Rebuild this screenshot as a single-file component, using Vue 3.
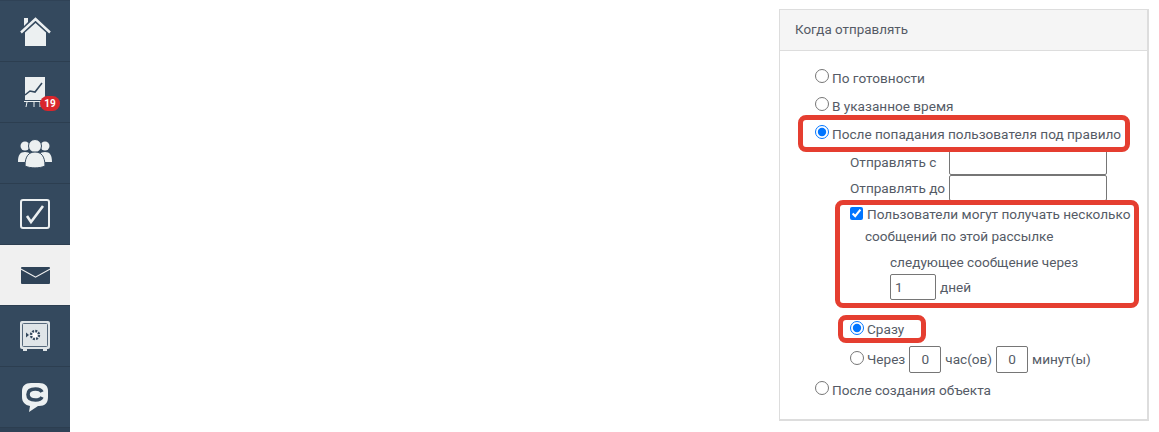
<template>
  <div class="page">
    <nav class="sidebar">
      <a v-for="item in items" :key="item.id" class="nav-item" :class="{ active: item.id === 'mail' }">
        <svg v-if="item.id === 'home'" width="31" height="29" viewBox="0 0 31 29">
          <path d="M4 1h4v4l-4 4z" fill="#ecf0f1" />
          <path d="M1 15.500 15.500 2 30 15.500" fill="none" stroke="#ecf0f1" stroke-width="2.4" />
          <path d="M5 15.500 15.500 6 26 15.500V29H5z" fill="#ecf0f1" />
        </svg>
        <svg v-else-if="item.id === 'chart'" width="22" height="30" viewBox="0 0 22 30">
          <path d="M1 0h20v23H1z" fill="#ecf0f1" />
          <path d="M1 18l5-4 5 1 7-9" fill="none" stroke="#34495e" stroke-width="1.6" />
          <path d="M0 24.500h22" stroke="#ecf0f1" stroke-width="1" />
          <path d="M3 25l-1 5M10 25v5M16 25v5" stroke="#ecf0f1" stroke-width="1" />
        </svg>
        <svg v-else-if="item.id === 'users'" width="34" height="29" viewBox="0 0 34 29">
          <circle cx="7" cy="7" r="4.500" fill="#ecf0f1" />
          <circle cx="27" cy="7" r="4.500" fill="#ecf0f1" />
          <path d="M0 23c0-7 2-10 7-10s7 3 7 10zM20 23c0-7 2-10 7-10s7 3 7 10z" fill="#ecf0f1" />
          <circle cx="17" cy="7" r="6.500" fill="#ecf0f1" stroke="#34495e" />
          <path d="M7 27c0-10 4-14 10-14s10 4 10 14c-5 2.500-15 2.500-20 0z" fill="#ecf0f1" stroke="#34495e" />
        </svg>
        <svg v-else-if="item.id === 'tasks'" width="30" height="30" viewBox="0 0 30 30">
          <rect x="1" y="1" width="28" height="28" rx="2" fill="none" stroke="#ecf0f1" stroke-width="2" />
          <path d="M7 17l4 6L23 7" fill="none" stroke="#ecf0f1" stroke-width="2.600" />
        </svg>
        <svg v-else-if="item.id === 'mail'" width="29" height="17" viewBox="0 0 29 17">
          <path d="M1 0h27a1 1 0 0 1 1 1v.5L14.500 9.500 0 1.500V1a1 1 0 0 1 1-1z" fill="#2f4358" />
          <path d="M0 2.800l14.500 8L29 2.800V16a1 1 0 0 1-1 1H1a1 1 0 0 1-1-1z" fill="#2f4358" />
        </svg>
        <svg v-else-if="item.id === 'safe'" width="30" height="30" viewBox="0 0 30 30">
          <rect x="0" y="0" width="30" height="28" rx="2" fill="#dfe5e8" />
          <path d="M3 28h4v2H3zM23 28h4v2h-4z" fill="#dfe5e8" />
          <rect x="2.500" y="2.500" width="25" height="23" rx="1" fill="#dfe5e8" stroke="#56697c" />
          <circle cx="15" cy="14" r="4" fill="#fff" stroke="#34495e" stroke-width="2.400" stroke-dasharray="2 1.100" />
          <path d="M6 11.500l3 2.500-3 2.500z" fill="#34495e" />
        </svg>
        <svg v-else width="26" height="29" viewBox="0 0 26 29">
          <path d="M9 0h8c6 0 9 3 9 8v6c0 6-3 9-9 9h-1l-9 6 1-6c-5-1-8-4-8-9V8c0-5 3-8 9-8z" fill="#ecf0f1" />
          <path d="M20 9c-1-2-3-3-6.500-3C8.500 6 6 8 6 11.500S8.500 17 13.500 17c3.500 0 5.500-1 6.500-3" fill="none" stroke="#34495e" stroke-width="3.600" />
        </svg>
        <span v-if="item.badge" class="badge">{{ item.badge }}</span>
      </a>
    </nav>

    <section class="panel">
      <header class="panel-head">Когда отправлять</header>
      <div class="panel-body">
        <label class="row"><input type="radio" name="when" />По готовности</label>
        <label class="row"><input type="radio" name="when" />В указанное время</label>
        <label class="row"><input type="radio" name="when" checked />После попадания пользователя под правило</label>

        <div class="sub">
          <div class="time-row"><span class="time-label">Отправлять с</span><input class="text-in time-in" type="text" /></div>
          <div class="time-row"><span class="time-label">Отправлять до</span><input class="text-in time-in" type="text" /></div>

          <div class="multi">
            <label class="check-line"><input type="checkbox" checked />Пользователи могут получать несколько</label>
            <div class="check-rest">сообщений по этой рассылке</div>
            <div class="next">
              <div class="next-title">следующее сообщение через</div>
              <div class="next-val"><input class="text-in days" type="text" value="1" />дней</div>
            </div>
          </div>

          <label class="row now"><input type="radio" name="delay" checked />Сразу</label>
          <div class="row later">
            <input type="radio" name="delay" />Через
            <input class="text-in small" type="text" value="0" />час(ов)
            <input class="text-in small" type="text" value="0" />минут(ы)
          </div>
        </div>

        <label class="row last"><input type="radio" name="when" />После создания объекта</label>
      </div>

      <div class="mark mark-rule"></div>
      <div class="mark mark-multi"></div>
      <div class="mark mark-now"></div>
    </section>
  </div>
</template>

<script setup>
const items = [
  { id: 'home' },
  { id: 'chart', badge: 19 },
  { id: 'users' },
  { id: 'tasks' },
  { id: 'mail' },
  { id: 'safe' },
  { id: 'chat' },
]
</script>

<style>
html, body { margin: 0; background: #fff; overflow: hidden; }
</style>

<style scoped>
.page {
  width: 1159px;
  height: 432px;
  overflow: hidden;
  display: flex;
  align-items: flex-start;
  font-family: Roboto, "Liberation Sans", sans-serif;
  font-size: 13.6px;
  color: #555b66;
}
.sidebar {
  width: 70px;
  height: 432px;
  flex: none;
  box-sizing: border-box;
  padding-top: 1px;
  background: #2f4256;
  display: flex;
  flex-direction: column;
}
.nav-item {
  position: relative;
  height: 60px;
  flex: none;
  display: flex;
  align-items: center;
  justify-content: center;
  background: #34495e;
  border-bottom: 1px solid #2c3e50;
}
.nav-item.active {
  background: #f0f0f0;
}
.badge {
  position: absolute;
  left: 40px;
  top: 34px;
  width: 20px;
  height: 15px;
  border-radius: 8px;
  background: #d9262c;
  color: #fff;
  font-size: 10px;
  font-weight: 700;
  line-height: 15px;
  text-align: center;
}
.panel {
  position: relative;
  width: 370px;
  height: 412px;
  margin: 9px 0 0 709px;
  box-sizing: border-box;
  border: 1px solid #ddd;
  border-width: 1px 2px 2px 1px;
}
.panel-head {
  height: 40px;
  padding-left: 15px;
  font-size: 13.4px;
  line-height: 39px;
  background: #f5f5f5;
  border-bottom: 1px solid #ddd;
}
.panel-body { padding: 13px 0 0 35px; }
.row {
  display: flex;
  align-items: center;
  height: 28px;
  white-space: nowrap;
}
.row input[type="radio"] {
  width: 14px;
  height: 14px;
  margin: -5px 3px 0 0;
}
.sub { padding-left: 35px; margin-top: 1px; }
.sub .row input[type="radio"],
.last input[type="radio"] { margin-top: -3px; }
.time-row {
  display: flex;
  align-items: center;
  height: 26px;
}
.time-label { width: 99px; flex: none; }
.text-in {
  box-sizing: border-box;
  border: 1px solid #767676;
  border-radius: 2px;
  font: inherit;
  color: inherit;
  background: #fff;
  padding: 0;
  outline: none;
}
.time-in { width: 158px; height: 26px; }
.multi { margin-top: 1px; height: 101px; }
.check-line {
  display: flex;
  align-items: center;
  height: 24px;
  white-space: nowrap;
}
.check-line input {
  width: 13px;
  height: 13px;
  margin: -2px 4px 0 0;
}
.check-rest { height: 21px; line-height: 21px; margin-left: 15px; }
.next { margin: 3px 0 0 40px; }
.next-title { height: 24px; line-height: 24px; }
.next-val { display: flex; align-items: center; gap: 4px; height: 26px; }
.days { width: 46px; height: 26px; padding-left: 4px; }
.now { margin-top: 11px; height: 30px; }
.later { height: 30px; gap: 0; }
.small { width: 32px; height: 27px; margin: 0 4px; text-align: center; }
.last { height: 31px; }
.mark {
  position: absolute;
  box-sizing: border-box;
  border: 5px solid #e53e30;
  border-radius: 8px;
  pointer-events: none;
}
.mark-rule { left: 18px; top: 105px; width: 332px; height: 37px; }
.mark-multi { left: 55px; top: 190px; width: 304px; height: 108px; }
.mark-now { left: 58px; top: 305px; width: 88px; height: 28px; }
</style>
